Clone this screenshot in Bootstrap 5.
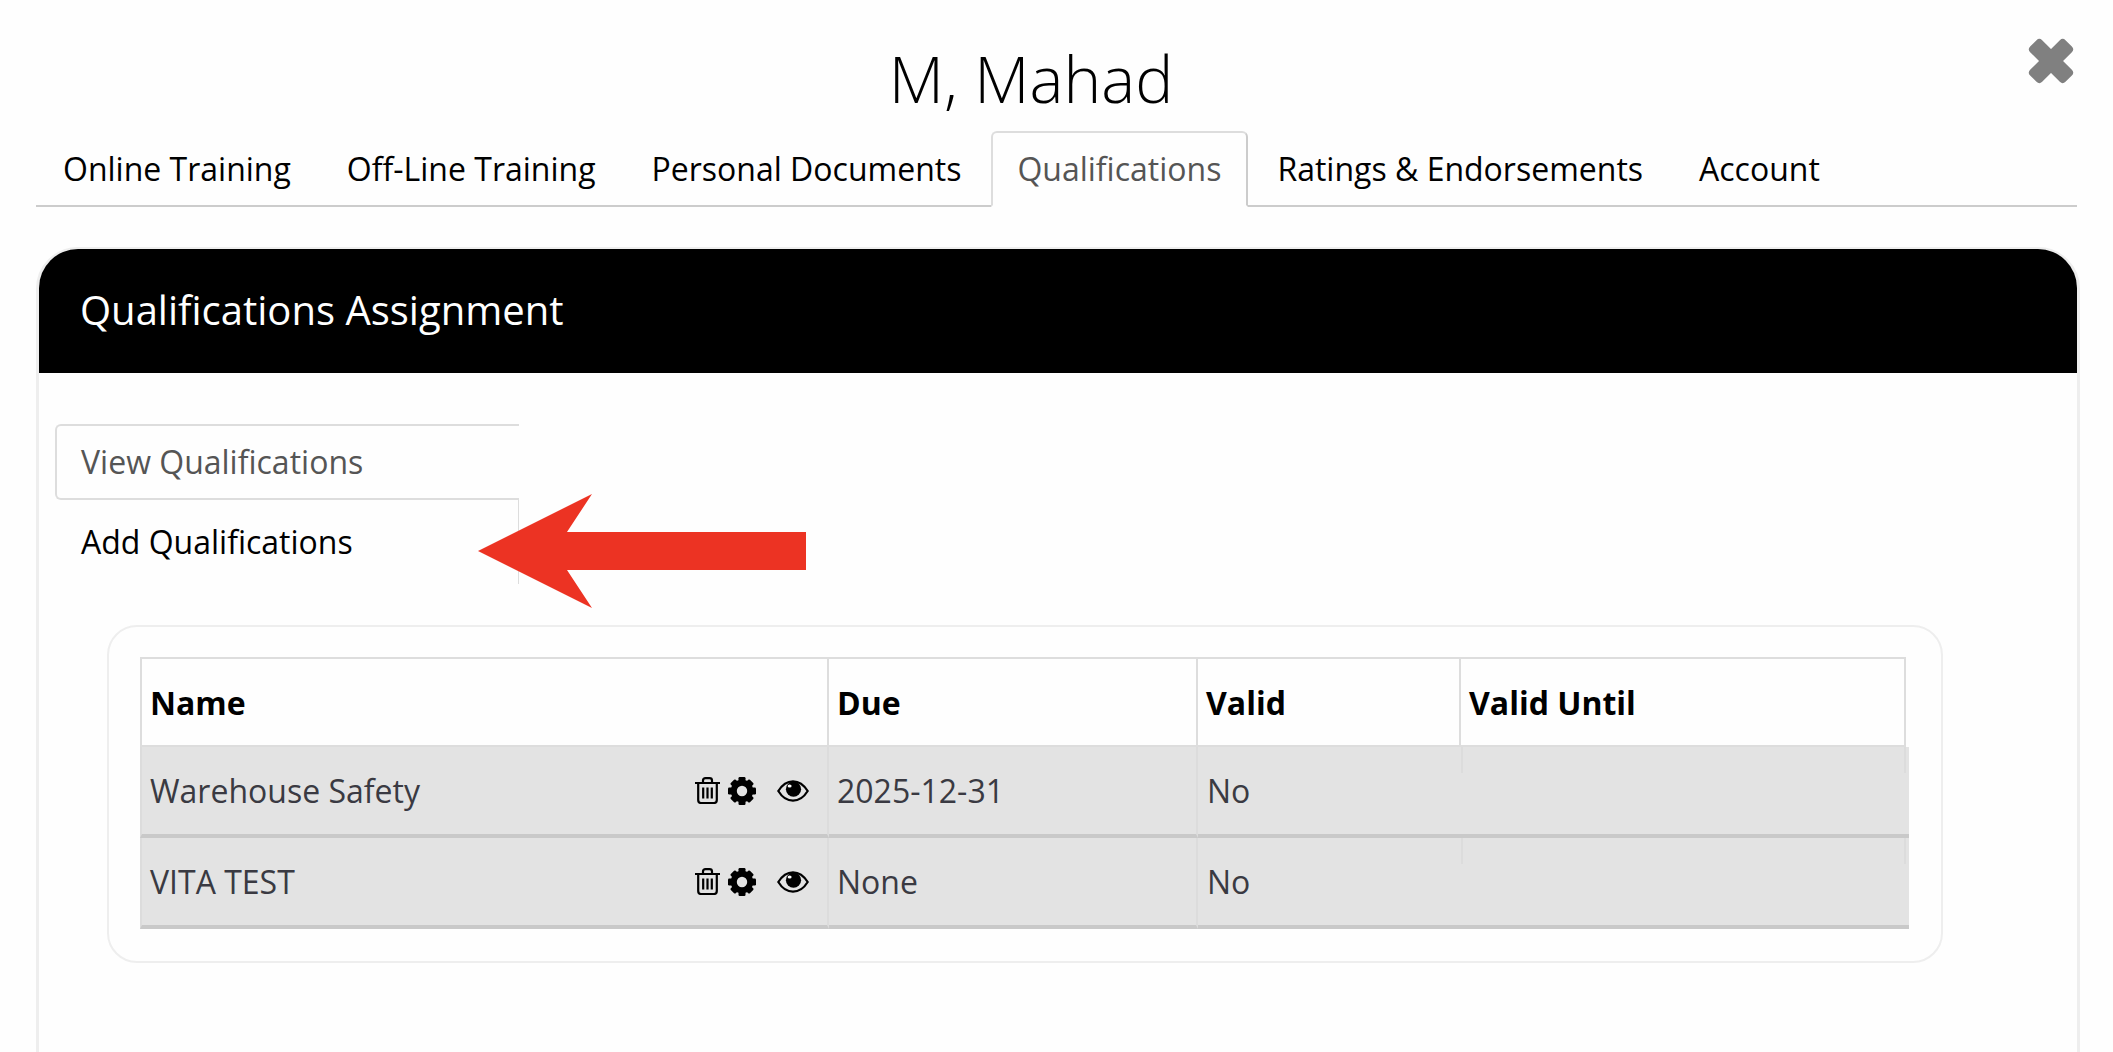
<!DOCTYPE html>
<html lang="en">
<head>
  <meta charset="UTF-8">
  <meta name="viewport" content="width=device-width, initial-scale=1.0">
  <title>M, Mahad</title>

  <link href="https://cdn.jsdelivr.net/npm/bootstrap@5.3.0/dist/css/bootstrap.min.css" rel="stylesheet">
  <style>
    html, body { height: 100%; }
    body { font-family: "Open Sans", "Liberation Sans", sans-serif; background: #fefefe; color: #000; }
    .page-wrap { position: relative; padding: 0 33px 0 36px; }

    .person-name { font-size: 64px; font-weight: 300; line-height: 87px; height: 131px; padding: 35px 54px 0 0; margin: 0; text-align: center; }
    .close-x { position: absolute; left: 2028px; top: 38px; width: 46px; height: 46px; color: #808080; }

    .main-tabs { --bs-nav-tabs-border-width: 2px; --bs-nav-tabs-border-color: #cccccc; --bs-nav-tabs-border-radius: 6px; width: 2041px; margin-bottom: 40px; }
    .main-tabs .nav-item:first-child { margin-left: -1px; }
    .main-tabs .nav-link { font-size: 32px; line-height: 44px; height: 76px; padding: 14px 26px; color: #000; border: 2px solid transparent; }
    .main-tabs .nav-link.active { color: #555; background: #fefefe; margin: 0 1px -2px 2px; padding-left: 24px; padding-right: 25px; border-color: #dddddd #cccccc #fefefe #dddddd; }

    .assign-card { --bs-card-border-radius: 42px; --bs-card-inner-border-radius: 39px; width: 2044px; min-height: 900px; border: 3px solid #eeeeee; background: #fefefe; }
    .assign-head { background: #000; color: #fff; height: 124px; padding: 0 41px; margin: -1px 0 0; font-size: 40px; line-height: 122px; border: 0; }

    .side-tabs { width: 464px; margin: 51px 0 41px 16px; }
    .side-tabs .nav-link { font-size: 32px; line-height: 44px; padding: 14px 24px; color: #000; }
    .side-tabs .view-tab { height: 76px; color: #555; border: 2px solid #dddddd; border-right: 0; border-radius: 6px 0 0 6px; }
    .side-tabs .add-tab { height: 84px; padding: 20px 26px 0; border-right: 1px solid #dddddd; }

    .table-box { width: 1836px; margin-left: 68px; padding: 30px 0 32px 31px; border: 2px solid #eeeeee; border-radius: 30px; }
    .qual-table { width: 1766px; margin: 0; table-layout: fixed; border-collapse: separate; border-spacing: 0; font-size: 32px; background: transparent; }
    .qual-table > :not(caption) > * > * { padding: 0; border: 0; background: transparent; box-shadow: none; }
    .qual-table th { height: 90px; padding: 2px 8px 0; font-weight: 700; color: #000; vertical-align: middle; border-top: 2px solid #dddddd !important; border-right: 2px solid #dddddd !important; border-bottom: 2px solid #dddddd !important; }
    .qual-table th:first-child { border-left: 2px solid #dddddd !important; }
    .qual-table td { height: 91px; background: #e3e3e3 !important; color: #3a3a42; vertical-align: top; border-bottom: 4px solid #c9c9c9 !important; border-right: 2px solid #dcdcdc !important; }
    .qual-table td:first-child { border-left: 2px solid #dcdcdc !important; }
    .qual-table td:nth-child(3) { border-right: 0 !important; }
    .qual-table td:nth-child(3) .cell-text { padding-left: 9px; }
    .qual-table td.tail-cell { background: transparent !important; border: 0 !important; }
    .cell-text { height: 87px; padding: 0 8px; line-height: 87px; }
    .tail-fill { margin-right: -3px; height: 91px; background: #e3e3e3; border-bottom: 4px solid #c9c9c9; }
    .tail-mark { width: 445px; height: 26px; border-left: 2px solid #dcdcdc; border-right: 2px solid #dcdcdc; }

    .row-icons { gap: 8px; padding-right: 10px; }
    .row-icons .eye-icon { margin-left: 13px; }
    .pointer-arrow { position: absolute; left: 478px; top: 493px; width: 329px; height: 116px; }
  </style>
</head>
<body class="overflow-hidden">

<div class="page-wrap">
  <h1 class="person-name">M, Mahad</h1>
  <svg class="close-x" viewBox="0 0 46 46" fill="currentColor">
    <rect x="-2" y="14.5" width="50" height="17" rx="4" transform="rotate(45 23 23)"/>
    <rect x="-2" y="14.5" width="50" height="17" rx="4" transform="rotate(-45 23 23)"/>
  </svg>

  <ul class="nav nav-tabs main-tabs">
    <li class="nav-item"><a class="nav-link" href="#">Online Training</a></li>
    <li class="nav-item"><a class="nav-link" href="#">Off-Line Training</a></li>
    <li class="nav-item"><a class="nav-link" href="#">Personal Documents</a></li>
    <li class="nav-item"><a class="nav-link active" href="#">Qualifications</a></li>
    <li class="nav-item"><a class="nav-link" href="#">Ratings &amp; Endorsements</a></li>
    <li class="nav-item"><a class="nav-link" href="#">Account</a></li>
  </ul>

  <div class="card assign-card">
    <div class="card-header assign-head">Qualifications Assignment</div>
    <div class="card-body p-0">
      <div class="nav flex-column side-tabs">
        <a class="nav-link view-tab" href="#">View Qualifications</a>
        <a class="nav-link add-tab" href="#">Add Qualifications</a>
      </div>

      <div class="table-box">
        <table class="table qual-table">
          <colgroup>
            <col style="width: 689px"><col style="width: 369px"><col style="width: 263px"><col>
          </colgroup>
          <thead>
            <tr><th>Name</th><th>Due</th><th>Valid</th><th>Valid Until</th></tr>
          </thead>
          <tbody>
            <tr>
              <td>
                <div class="cell-text d-flex justify-content-between align-items-center">
                  <span>Warehouse Safety</span>
                  <span class="row-icons d-flex align-items-center">
                    <svg width="25" height="27" viewBox="0 0 25 27"><use href="#trash-icon"/></svg>
                    <svg width="28" height="28" viewBox="0 0 28 28"><use href="#gear-icon"/></svg>
                    <svg class="eye-icon" width="32" height="22" viewBox="0 0 32 22"><use href="#eye-icon"/></svg>
                  </span>
                </div>
              </td>
              <td><div class="cell-text">2025-12-31</div></td>
              <td><div class="cell-text">No</div></td>
              <td class="tail-cell"><div class="tail-fill"><div class="tail-mark"></div></div></td>
            </tr>
            <tr>
              <td>
                <div class="cell-text d-flex justify-content-between align-items-center">
                  <span>VITA TEST</span>
                  <span class="row-icons d-flex align-items-center">
                    <svg width="25" height="27" viewBox="0 0 25 27"><use href="#trash-icon"/></svg>
                    <svg width="28" height="28" viewBox="0 0 28 28"><use href="#gear-icon"/></svg>
                    <svg class="eye-icon" width="32" height="22" viewBox="0 0 32 22"><use href="#eye-icon"/></svg>
                  </span>
                </div>
              </td>
              <td><div class="cell-text">None</div></td>
              <td><div class="cell-text">No</div></td>
              <td class="tail-cell"><div class="tail-fill"><div class="tail-mark"></div></div></td>
            </tr>
          </tbody>
        </table>
      </div>
    </div>
  </div>

  <svg class="pointer-arrow" viewBox="0 0 329 116"><polygon fill="#ec3323" points="0,58 114,1 89,39 328,39 328,77 89,77 114,115"/></svg>
</div>

<!-- shared icons -->
<svg width="0" height="0" class="d-block">
  <defs>
    <g id="trash-icon">
      <path fill="none" stroke="#000" stroke-width="2.2" d="M0 6H25M8 6V3.5Q8 1.2 10.5 1.2H14.5Q17 1.2 17 3.5V6M3.2 6V23Q3.2 26 6 26H19Q21.8 26 21.8 23V6"/>
      <path fill="none" stroke="#000" stroke-width="2.2" d="M8.2 10.5V21.5M12.5 10.5V21.5M16.8 10.5V21.5"/>
    </g>
    <g id="gear-icon">
      <circle cx="14" cy="14" r="8.2" fill="none" stroke="#000" stroke-width="6"/>
      <g fill="#000">
        <rect x="10.5" y="0" width="7" height="7" rx="1.2"/>
        <rect x="10.5" y="21" width="7" height="7" rx="1.2"/>
        <rect x="0" y="10.5" width="7" height="7" rx="1.2"/>
        <rect x="21" y="10.5" width="7" height="7" rx="1.2"/>
        <rect x="10.5" y="0.5" width="7" height="7" rx="1.2" transform="rotate(45 14 14)"/>
        <rect x="10.5" y="20.5" width="7" height="7" rx="1.2" transform="rotate(45 14 14)"/>
        <rect x="0.5" y="10.5" width="7" height="7" rx="1.2" transform="rotate(45 14 14)"/>
        <rect x="20.5" y="10.5" width="7" height="7" rx="1.2" transform="rotate(45 14 14)"/>
      </g>
    </g>
    <g id="eye-icon">
      <path fill="none" stroke="#000" stroke-width="2.2" d="M1.3 11C5 5 10 1.3 16 1.3S27 5 30.7 11C27 17 22 20.7 16 20.7S5 17 1.3 11Z"/>
      <circle cx="16.5" cy="9.2" r="7.6" fill="#000"/>
      <ellipse cx="12.6" cy="6" rx="2" ry="1.5" fill="#fff"/>
    </g>
  </defs>
</svg>

<script src="https://cdn.jsdelivr.net/npm/bootstrap@5.3.0/dist/js/bootstrap.bundle.min.js"></script>
</body>
</html>
